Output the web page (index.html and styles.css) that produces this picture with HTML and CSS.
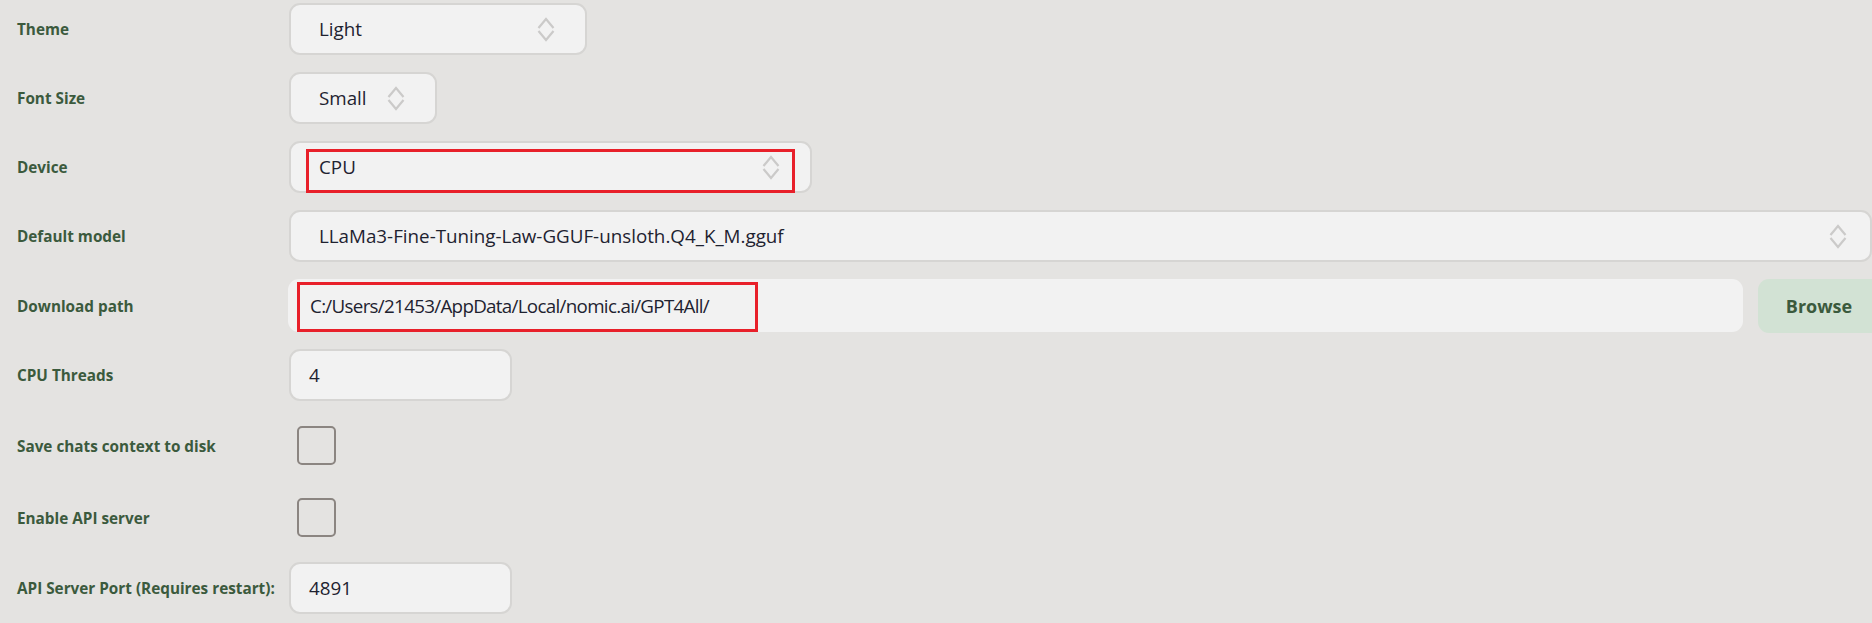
FILE: index.html
```html
<!DOCTYPE html>
<html lang="en">
<head>
<meta charset="utf-8">
<title>Settings</title>
<link rel="stylesheet" href="styles.css">
</head>
<body>
<main class="settings">
  <div class="label">Theme</div>
  <div class="field">
    <div class="combo w-theme"><span class="value">Light</span>
      <svg class="spin" viewBox="0 0 18 27" width="18" height="27"><polyline points="1.5,12 9,3 16.5,12"/><polyline points="1.5,15 9,24 16.5,15"/></svg>
    </div>
  </div>

  <div class="label">Font Size</div>
  <div class="field">
    <div class="combo w-font"><span class="value">Small</span>
      <svg class="spin" viewBox="0 0 18 27" width="18" height="27"><polyline points="1.5,12 9,3 16.5,12"/><polyline points="1.5,15 9,24 16.5,15"/></svg>
    </div>
  </div>

  <div class="label">Device</div>
  <div class="field">
    <div class="combo w-device"><span class="value">CPU</span>
      <svg class="spin" viewBox="0 0 18 27" width="18" height="27"><polyline points="1.5,12 9,3 16.5,12"/><polyline points="1.5,15 9,24 16.5,15"/></svg>
      <span class="mark mark-device"></span>
    </div>
  </div>

  <div class="label">Default model</div>
  <div class="field">
    <div class="combo w-model"><span class="value">LLaMa3-Fine-Tuning-Law-GGUF-unsloth.Q4_K_M.gguf</span>
      <svg class="spin" viewBox="0 0 18 27" width="18" height="27"><polyline points="1.5,12 9,3 16.5,12"/><polyline points="1.5,15 9,24 16.5,15"/></svg>
    </div>
  </div>

  <div class="label">Download path</div>
  <div class="field path-row">
    <div class="path"><span class="value path-value">C:/Users/21453/AppData/Local/nomic.ai/GPT4All/</span>
      <span class="mark mark-path"></span>
    </div>
    <button class="browse">Browse</button>
  </div>

  <div class="label">CPU Threads</div>
  <div class="field">
    <div class="text w-num"><span class="value">4</span></div>
  </div>

  <div class="label">Save chats context to disk</div>
  <div class="field">
    <span class="check"></span>
  </div>

  <div class="label">Enable API server</div>
  <div class="field">
    <span class="check"></span>
  </div>

  <div class="label">API Server Port (Requires restart):</div>
  <div class="field">
    <div class="text w-num"><span class="value">4891</span></div>
  </div>
</main>
</body>
</html>
```
FILE: styles.css
```css
html, body {
  margin: 0;
  padding: 0;
}
body {
  width: 1872px;
  height: 623px;
  overflow: hidden;
  background: #e4e3e1;
  font-family: "Open Sans", "Noto Sans", sans-serif;
}
.settings {
  display: grid;
  grid-template-columns: 272px 1600px;
  grid-template-rows: 52px 52px 52px 52px 53px 52px 55px 55px 52px;
  row-gap: 17px;
  padding: 3px 0 0 17px;
}
.label {
  display: flex;
  align-items: center;
  font-size: 15.3px;
  font-weight: 700;
  color: #3b5a3d;
  white-space: nowrap;
}
.field {
  display: flex;
  align-items: center;
}
.combo, .text, .path {
  box-sizing: border-box;
  height: 52px;
  display: flex;
  align-items: center;
  background: #f2f2f2;
  border: 2px solid #d6d5d3;
  border-radius: 11px;
  position: relative;
}
.combo {
  padding: 0 30px 0 28px;
}
.value {
  font-size: 18.8px;
  color: #1e2230;
  white-space: nowrap;
  flex: 1;
}
.path-value {
  letter-spacing: -0.7px;
}
.spin {
  flex: none;
  fill: none;
  stroke: #cbcac9;
  stroke-width: 2.2;
}
.w-theme { width: 298px; }
.w-font { width: 148px; }
.w-font .value { flex: none; margin-right: 20px; }
.w-device { width: 523px; }
.w-model { width: 1583px; padding-right: 23px; }
.text {
  padding: 0 20px 0 18px;
}
.w-num { width: 223px; }
.path-row {
  gap: 15px;
}
.path {
  width: 1455px;
  height: 53px;
  margin-left: -1px;
  border: none;
  padding: 0 20px 0 22px;
}
.browse {
  box-sizing: border-box;
  width: 124px;
  height: 54px;
  border: none;
  border-radius: 11px;
  background: #d2e2d4;
  color: #3b5a3d;
  font-family: "Open Sans", "Noto Sans", sans-serif;
  font-size: 18px;
  font-weight: 700;
  padding: 0 2px 0 0;
}
.check {
  box-sizing: border-box;
  width: 39px;
  height: 39px;
  margin-left: 8px;
  border: 2px solid #8b8581;
  border-radius: 5px;
}
.mark {
  position: absolute;
  box-sizing: border-box;
  border: 3px solid #e8202a;
}
.mark-device {
  left: 15px;
  top: 6px;
  width: 489px;
  height: 44px;
}
.mark-path {
  left: 9px;
  top: 3px;
  width: 461px;
  height: 50px;
}
```
